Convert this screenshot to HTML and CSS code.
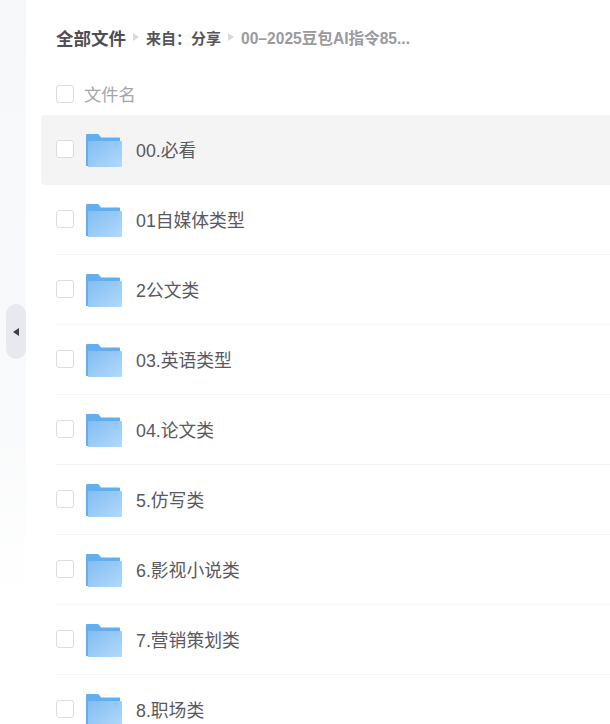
FILE: index.html
```html
<!DOCTYPE html>
<html lang="zh">
<head>
    <meta charset="UTF-8">
    <meta name="viewport" content="width=device-width, initial-scale=1.0">
    <title>全部文件</title>
    <link rel="stylesheet" href="styles.css">
</head>
<body>

<svg class="svg-defs" width="0" height="0">
    <defs>
        <linearGradient id="folder-front" x1="0" y1="0" x2="1" y2="1">
            <stop offset="0" stop-color="#82bdf1"/>
            <stop offset="1" stop-color="#b2d9fc"/>
        </linearGradient>
        <symbol id="folder" viewBox="0 0 36 33">
            <path d="M0 1a1 1 0 0 1 1-1h10.500a2 2 0 0 1 1.500 .8l2 2.700h18a1 1 0 0 1 1 1v27.500h-34z" fill="#62aeee"/>
            <path d="M2 7h33a1 1 0 0 1 1 1v24a1 1 0 0 1-1 1h-33z" fill="url(#folder-front)"/>
            <rect x="27" y="9" width="5" height="1" fill="#8fc6f5"/>
            <rect x="27" y="11" width="5" height="1" fill="#8fc6f5"/>
        </symbol>
    </defs>
</svg>

<div class="sidebar">
    <div class="toggle"><span class="toggle-arrow"></span></div>
</div>

<div class="main">
    <div class="crumbs">
        <span class="crumb-root">全部文件</span>
        <span class="crumb-sep"></span>
        <span class="crumb-link">来自：分享</span>
        <span class="crumb-sep"></span>
        <span class="crumb-current">00–2025豆包AI指令85...</span>
    </div>

    <div class="list-head">
        <span class="check"></span>
        <span class="list-head-name">文件名</span>
    </div>

    <div class="row row-active">
        <span class="check"></span>
        <svg class="folder"><use href="#folder"/></svg>
        <span class="name">00.必看</span>
    </div>
    <div class="row">
        <span class="check"></span>
        <svg class="folder"><use href="#folder"/></svg>
        <span class="name">01自媒体类型</span>
    </div>
    <div class="row">
        <span class="check"></span>
        <svg class="folder"><use href="#folder"/></svg>
        <span class="name">2公文类</span>
    </div>
    <div class="row">
        <span class="check"></span>
        <svg class="folder"><use href="#folder"/></svg>
        <span class="name">03.英语类型</span>
    </div>
    <div class="row">
        <span class="check"></span>
        <svg class="folder"><use href="#folder"/></svg>
        <span class="name">04.论文类</span>
    </div>
    <div class="row">
        <span class="check"></span>
        <svg class="folder"><use href="#folder"/></svg>
        <span class="name">5.仿写类</span>
    </div>
    <div class="row">
        <span class="check"></span>
        <svg class="folder"><use href="#folder"/></svg>
        <span class="name">6.影视小说类</span>
    </div>
    <div class="row">
        <span class="check"></span>
        <svg class="folder"><use href="#folder"/></svg>
        <span class="name">7.营销策划类</span>
    </div>
    <div class="row">
        <span class="check"></span>
        <svg class="folder"><use href="#folder"/></svg>
        <span class="name">8.职场类</span>
    </div>
</div>

</body>
</html>
```

FILE: styles.css
```css
html, body {
    height: 100%;
}

body {
    margin: 0;
    padding: 0;
    display: flex;
    overflow: hidden;
    background-color: #fff;
    font-family: "Liberation Sans", "Noto Sans CJK SC", sans-serif;
}

.svg-defs {
    position: absolute;
}

.sidebar {
    position: relative;
    flex: 0 0 26px;
    height: 100%;
    background: linear-gradient(180deg, #f7f8fa 0, #f9fafb 430px, #fff 600px);
}

/* the collapse handle sits over the sidebar edge */
.toggle {
    position: absolute;
    left: 6px;
    top: 304px;
    width: 20px;
    height: 55px;
    display: flex;
    align-items: center;
    justify-content: center;
    background-color: #e8e9ee;
    border-radius: 10px;
}

.toggle-arrow {
    width: 0;
    height: 0;
    border-top: 4px solid transparent;
    border-bottom: 4px solid transparent;
    border-right: 6px solid #3d3f45;
}

.main {
    flex: 1;
    min-width: 0;
    padding: 0 0 0 30px;
}

.crumbs {
    display: flex;
    align-items: center;
    height: 24px;
    padding-top: 25px;
    font-size: 15px;
    font-weight: bold;
    white-space: nowrap;
}

.crumb-root {
    font-size: 17.5px;
    color: #4e4f55;
}

.crumb-link {
    color: #55565c;
}

.crumb-current {
    font-size: 15.6px;
    color: #9a9a9f;
}

.crumb-sep {
    width: 0;
    height: 0;
    margin: 0 7px;
    border-top: 4px solid transparent;
    border-bottom: 4px solid transparent;
    border-left: 6px solid #d8d9dc;
}

.list-head {
    display: flex;
    align-items: center;
    height: 24px;
    margin-top: 33px;
}

.list-head-name {
    margin-left: 10px;
    margin-bottom: 2px;
    font-size: 17.3px;
    color: #a5a5a9;
}

.check {
    flex: none;
    box-sizing: border-box;
    width: 18px;
    height: 18px;
    background-color: #fff;
    border: 1px solid #dcdcdf;
    border-radius: 3px;
}

.row {
    display: flex;
    align-items: center;
    box-sizing: border-box;
    height: 70px;
    border-bottom: 1px solid #f4f4f6;
}

.row .check {
    margin-bottom: 1px;
}

.list-head + .row {
    margin-top: 9px;
}

.row-active {
    margin-left: -15px;
    padding-left: 15px;
    background-color: #f4f4f4;
    border-bottom-color: transparent;
    border-radius: 4px 0 0 4px;
}

.folder {
    flex: none;
    width: 36px;
    height: 33px;
    margin-top: 2px;
    margin-left: 12px;
}

.name {
    margin-left: 14px;
    margin-bottom: 2px;
    font-size: 17.8px;
    color: #58595e;
}
```
